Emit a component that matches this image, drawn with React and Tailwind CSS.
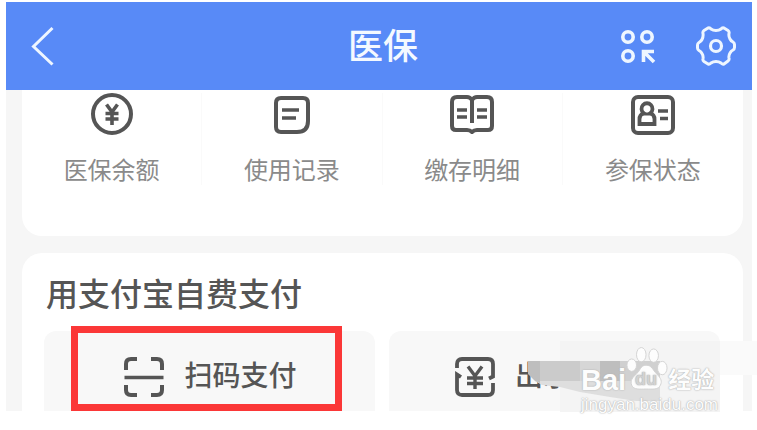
import React from 'react';

const YuanIcon = () => (
  <svg width="44" height="44" viewBox="0 0 44 44" fill="none" stroke="#555" aria-hidden="true">
    <circle cx="22" cy="21" r="19" strokeWidth="4" />
    <path d="M16.5 11.5 22 19l5.5-7.5M22 19v13M15.5 20.5h13M15.5 26h13" strokeWidth="3.6" />
  </svg>
);

const RecordIcon = () => (
  <svg width="44" height="44" viewBox="0 0 44 44" fill="none" stroke="#555" aria-hidden="true">
    <path d="M11 5h22q5 0 5 5v18q0 11-11 11H11q-5 0-5-5V10q0-5 5-5z" strokeWidth="4" />
    <path d="M12 17h17M12 25h14" strokeWidth="3.6" />
  </svg>
);

const BookIcon = () => (
  <svg width="44" height="44" viewBox="0 0 44 44" fill="none" stroke="#555" aria-hidden="true">
    <path
      d="M22 7q-2-3-5-3H7Q2 4 2 9v24q0 4 4 4h11q3 0 5 2 2-2 5-2h11q4 0 4-4V9q0-5-5-5H27q-3 0-5 3v23"
      strokeWidth="4"
      strokeLinejoin="round"
    />
    <path d="M7 17h10M7 24h10M27 17h10M27 24h10" strokeWidth="3.4" />
  </svg>
);

const CardIcon = () => (
  <svg width="44" height="44" viewBox="0 0 44 44" fill="none" stroke="#555" aria-hidden="true">
    <rect x="2" y="4" width="40" height="36" rx="5" strokeWidth="4" />
    <path d="M12.5 20a5.500 5.500 0 1 1 7 0q4 2 4 6v5h-15v-5q0-4 4-6z" strokeWidth="3.8" />
    <path d="M12 21h8" strokeWidth="3" />
    <path d="M27 18h10M29 25.5h8" strokeWidth="3.6" />
  </svg>
);

const ScanIcon = () => (
  <svg width="40" height="40" viewBox="0 0 40 40" fill="none" stroke="#555" strokeWidth="4" aria-hidden="true">
    <path d="M2 13V7q0-5 5-5h6M27 2h6q5 0 5 5v6M38 28v5q0 5-5 5h-6M13 38H7q-5 0-5-5v-5" />
    <path d="M.5 20.5h39" strokeWidth="3.4" />
  </svg>
);

const PayCodeIcon = () => (
  <svg width="40" height="40" viewBox="0 0 40 40" fill="none" stroke="#555" strokeWidth="3.8" aria-hidden="true">
    <path d="M2 11V7q0-5 5-5h26q5 0 5 5v12.5l-4 2M38 26v7q0 5-5 5H7q-5 0-5-5V17.5l4 2.5" />
    <path d="M13 9.5 20 19l7-9.500M20 19v13M12 21h16M12 26.500h16" strokeWidth="3.4" />
  </svg>
);

const BackIcon = () => (
  <svg width="24" height="40" viewBox="0 0 24 40" fill="none" stroke="#eef6ff" strokeWidth="3" aria-hidden="true">
    <path d="M22.5 2 3.5 20.5 22.5 38.5" />
  </svg>
);

const ServicesIcon = () => (
  <svg width="36" height="36" viewBox="0 0 36 36" fill="none" stroke="#eef6ff" strokeWidth="3.6" aria-hidden="true">
    <circle cx="8" cy="9" r="5.2" />
    <circle cx="27" cy="9" r="5.2" />
    <circle cx="8" cy="28" r="5.2" />
    <path d="M34 23.5H23.5V34M24 24l10 10" />
  </svg>
);

const GearIcon = () => (
  <svg width="40" height="40" viewBox="0 0 40 40" fill="none" stroke="#eef6ff" strokeWidth="3" strokeLinejoin="round" aria-hidden="true">
    <path d="M12 2q2-.5 3 1 2 1.500 5 1.500T25 3q1-1.500 3-1l4 2.500q1.500 1 1 3-.5 3 1 5.500 1 2 3 3 1.500 1 1.500 2.500v3q0 1.500-1.500 2.500-2 1-3 3-1.500 2.500-1 5 .5 2-1 3L28 38q-2 .5-3-1-2-1.500-5-1.500T15 37q-1 1.500-3 1l-4-2.500q-1.500-1-1-3 .5-2.500-1-5-1-2-3-3-1.500-1-1.500-2.500v-3q0-1.500 1.500-2.500 2-1 3-3Q7.500 10.500 7 7.500q-.5-2 1-3z" />
    <circle cx="20" cy="20" r="5.5" strokeWidth="3.2" />
  </svg>
);

const Paw = () => (
  <svg width="42" height="46" viewBox="0 0 44 48" className="shrink-0" aria-hidden="true">
    <g fill="#fdfdfd" stroke="#d2d2d2" strokeWidth="1">
      <ellipse cx="16" cy="9" rx="5" ry="7.5" />
      <ellipse cx="29" cy="10" rx="5" ry="7" />
      <ellipse cx="6" cy="20" rx="5" ry="6.5" />
      <ellipse cx="38" cy="23" rx="5" ry="7" />
      <path d="M21 20c6 0 7 5 11 9 5 5 6 8 4 12-2 5-8 4-15 4s-13 1-15-4c-2-5 1-8 5-12 4-3 4-9 10-9z" />
    </g>
    <text x="21" y="41" textAnchor="middle" className="fill-[#d2d2d2] text-[19px] font-bold">du</text>
  </svg>
);

const tiles = [
  { label: '医保余额', Icon: YuanIcon },
  { label: '使用记录', Icon: RecordIcon },
  { label: '缴存明细', Icon: BookIcon },
  { label: '参保状态', Icon: CardIcon },
];

const Header = () => (
  <header className="grid h-[88px] grid-cols-[1fr_auto_1fr] items-center bg-[#588af7] pl-6 pr-4">
    <button aria-label="返回" className="justify-self-start">
      <BackIcon />
    </button>
    <h1 className="text-[35px] leading-none font-medium text-[#f4f9ff]">医保</h1>
    <div className="flex items-center gap-10 justify-self-end">
      <button aria-label="更多服务">
        <ServicesIcon />
      </button>
      <button aria-label="设置">
        <GearIcon />
      </button>
    </div>
  </header>
);

const Watermark = () => (
  <div className="absolute right-9 -bottom-[3px] flex w-[140px] flex-col gap-[3px] whitespace-nowrap text-[#fdfdfd] [text-shadow:0_0_1px_#aaa,0_0_2px_#bbb]">
    <div className="flex items-end">
      <span className="text-[29px] leading-6 font-bold">Bai</span>
      <Paw />
      <span className="text-[23px] leading-6 font-bold">经验</span>
    </div>
    <span className="text-[17px] leading-5">jingyan.baidu.com</span>
  </div>
);

// blocks that hide the end of the second button's label
const Mosaic = () => (
  <svg width="231" height="72" viewBox="0 0 231 72" className="absolute right-0 bottom-0" aria-hidden="true">
    <path d="M34 1h160v71H34z" fill="#f4f4f4" />
    <path d="M194 1h37v34h-37z" fill="#fafafa" />
    <path d="M9 41h125v20h-24L84 57 54 52 34 47 16 45z" fill="#dedede" />
    <path d="M2 21h12v22l-5-2-7-7z" fill="#bebebe" />
    <path d="M14 21h40v20H14z" fill="#cbcbcb" />
    <path d="M54 21h20v20H54z" fill="#d6d6d6" />
    <path d="M74 21h20v20H74z" fill="#bebebe" />
    <path d="M94 21h40v20H94z" fill="#d0d0d0" />
  </svg>
);

export default function App() {
  return (
    <div
      lang="zh-CN"
      className="relative bg-white pt-[2px] pr-[5px] pb-[19px] pl-[6px] font-['Liberation_Sans','Noto_Sans_CJK_SC',sans-serif]"
    >
      <Header />
      <main className="flex flex-col gap-[17px] bg-[#f6f6f6] pr-[9px] pl-4">
        <nav className="grid grid-cols-4 divide-x divide-[#fafafa] rounded-b-[20px] bg-white pt-[3px] pb-[51px]">
          {tiles.map(({ label, Icon }) => (
            <button key={label} className="flex flex-col items-center gap-5">
              <Icon />
              <span className="text-2xl leading-7 text-[#8a8a8a]">{label}</span>
            </button>
          ))}
        </nav>

        <section className="rounded-t-[20px] bg-white pt-6 pr-[23px] pl-[22px]">
          <h2 className="pl-[2px] text-[32px] leading-9 font-medium text-[#555]">用支付宝自费支付</h2>
          <div className="mt-[18px] grid grid-cols-2 gap-[14px]">
            <button className="relative flex h-20 items-center justify-center gap-5 rounded-t-xl bg-[#f8f8f8] pt-3 pl-[2px] text-[28px] leading-8 font-medium text-[#555]">
              <ScanIcon />
              扫码支付
              <span className="absolute -top-[5px] right-[33px] bottom-0 left-[27px] border-[7px] border-[#fb3737]" />
            </button>
            <button className="flex h-20 items-center gap-5 rounded-t-xl bg-[#f8f8f8] pt-3 pl-[66px] text-[28px] leading-8 font-medium text-[#555]">
              <PayCodeIcon />
              出示
            </button>
          </div>
        </section>
      </main>
      <div className="absolute right-0 bottom-[18px]">
        <Mosaic />
        <Watermark />
      </div>
    </div>
  );
}
